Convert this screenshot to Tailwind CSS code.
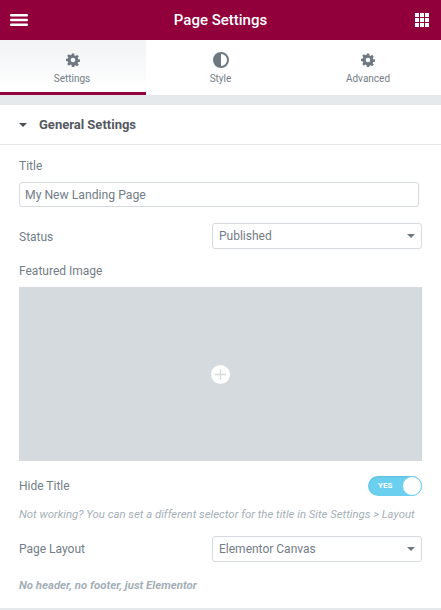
<!DOCTYPE html>
<html lang="en">

<head>
    <meta charset="UTF-8">
    <script src="https://cdn.jsdelivr.net/npm/@tailwindcss/browser@4"></script>
    <title>Page Settings</title>
</head>

<body class="h-[610px] w-[441px] overflow-hidden bg-white font-['Roboto',sans-serif] text-[#737d87]">
    <!-- Header -->
    <header class="flex h-10 items-center justify-between bg-[#92003b] pl-[10px] pr-3 text-white">
        <svg class="h-3 w-[18px]" viewBox="0 0 18 12" fill="currentColor">
            <rect y="0" width="18" height="2.500" rx="1"></rect>
            <rect y="4.750" width="18" height="2.500" rx="1"></rect>
            <rect y="9.500" width="18" height="2.500" rx="1"></rect>
        </svg>
        <h1 class="-translate-x-px text-[15px] leading-none font-medium">Page Settings</h1>
        <svg class="h-[14px] w-[14px]" viewBox="0 0 14 14" fill="currentColor">
            <rect x="0" y="0" width="4" height="4"></rect>
            <rect x="5" y="0" width="4" height="4"></rect>
            <rect x="10" y="0" width="4" height="4"></rect>
            <rect x="0" y="5" width="4" height="4"></rect>
            <rect x="5" y="5" width="4" height="4"></rect>
            <rect x="10" y="5" width="4" height="4"></rect>
            <rect x="0" y="10" width="4" height="4"></rect>
            <rect x="5" y="10" width="4" height="4"></rect>
            <rect x="10" y="10" width="4" height="4"></rect>
        </svg>
    </header>

    <!-- Tabs -->
    <nav class="grid h-[55px] grid-cols-[146px_149px_146px] shadow-[0_1px_3px_rgba(0,0,0,0.12)]">
        <div class="flex flex-col items-center border-b-[3px] border-[#92003b] bg-gradient-to-b from-[#f1f3f5] to-white pt-[13px]">
            <svg class="h-[14px] w-[14px]" viewBox="0 0 24 24" fill="#6d7882">
                <path fill-rule="evenodd" d="M14 1l.5 3.2 1.9.8 2.7-1.9 2.8 2.8-1.9 2.7.8 1.9 3.2.5v4l-3.2.5-.8 1.9 1.9 2.7-2.8 2.8-2.7-1.9-1.900.8L14 23.900h-4l-.5-3.200-1.900-.8-2.700 1.900-2.800-2.800 1.900-2.700-.8-1.900L0 13.900v-4l3.200-.5.8-1.900-1.900-2.700 2.800-2.800 2.700 1.900 1.900-.8L10 1h4zm-2 7a4 4 0 100 8 4 4 0 000-8z"></path>
            </svg>
            <span class="mt-[5px] -translate-x-px text-[10px] leading-[14px]">Settings</span>
        </div>
        <div class="flex flex-col items-center pt-[13px]">
            <svg class="-mt-[1px] h-[16px] w-[16px]" viewBox="0 0 16 16">
                <circle cx="8" cy="8" r="7" fill="none" stroke="#6d7882" stroke-width="2"></circle>
                <path d="M8 1a7 7 0 000 14z" fill="#6d7882"></path>
            </svg>
            <span class="mt-[4px] text-[10px] leading-[14px]">Style</span>
        </div>
        <div class="flex flex-col items-center pt-[13px]">
            <svg class="h-[14px] w-[14px]" viewBox="0 0 24 24" fill="#6d7882">
                <path fill-rule="evenodd" d="M14 1l.5 3.2 1.9.8 2.7-1.9 2.8 2.8-1.9 2.7.8 1.9 3.2.5v4l-3.2.5-.8 1.9 1.9 2.7-2.8 2.8-2.7-1.9-1.900.8L14 23.900h-4l-.5-3.200-1.900-.8-2.700 1.900-2.800-2.800 1.900-2.700-.8-1.900L0 13.900v-4l3.200-.5.8-1.900-1.900-2.700 2.800-2.800 2.700 1.900 1.900-.8L10 1h4zm-2 7a4 4 0 100 8 4 4 0 000-8z"></path>
            </svg>
            <span class="mt-[5px] text-[10px] leading-[14px]">Advanced</span>
        </div>
    </nav>

    <div class="h-[10px] bg-[#e6e9ec]"></div>

    <!-- Section title -->
    <div class="flex h-10 items-center gap-3 border-b border-[#e6e9ec] pl-[19px]">
        <span class="h-0 w-0 border-x-[4px] border-t-[4px] border-x-transparent border-t-[#495157]"></span>
        <h2 class="text-[13px] font-bold text-[#54595f]">General Settings</h2>
    </div>

    <!-- Controls -->
    <main class="px-[19px]">
        <p class="mt-[14px] text-xs leading-[15px]">Title</p>
        <div class="mt-[8px] flex h-[25px] w-[400px] items-center rounded-[3px] border border-[#d5dadf] px-[5px] pt-px text-[12.200px]">My New Landing Page</div>

        <div class="mt-[16px] flex items-center justify-between">
            <span class="pt-px text-xs">Status</span>
            <div class="flex h-[26px] w-[210px] items-center justify-between rounded-[3px] border border-[#d5dadf] px-[6px] text-xs">
                Published
                <span class="h-0 w-0 border-x-[4px] border-t-[4px] border-x-transparent border-t-[#6d7882]"></span>
            </div>
        </div>

        <p class="mt-[15px] text-xs leading-[15px]">Featured Image</p>
        <div class="mt-[8px] flex h-[174px] w-[403px] items-center justify-center bg-[#d5dadf]">
            <span class="flex h-[19px] w-[19px] items-center justify-center rounded-full bg-white">
                <svg class="h-[11px] w-[11px]" viewBox="0 0 11 11" stroke="#d5dadf" stroke-width="1.300">
                    <path d="M5.500 0v11M0 5.500h11"></path>
                </svg>
            </span>
        </div>

        <div class="mt-[15px] flex h-5 w-[403px] items-center justify-between">
            <span class="text-xs">Hide Title</span>
            <div class="flex h-5 w-[54px] items-center justify-between rounded-full bg-[#6bd0f0] pl-[10px] shadow-[inset_0_1px_2px_rgba(0,0,0,0.1)]">
                <span class="text-[8px] font-bold text-white">YES</span>
                <span class="h-5 w-5 rounded-full border border-[#6bd0f0] bg-white"></span>
            </div>
        </div>

        <p class="mt-[10px] text-[11.350px] leading-[16px] whitespace-nowrap italic text-[#a4afb7]">Not working? You can set a different selector for the title in Site Settings &gt; Layout</p>

        <div class="mt-[14px] flex w-[403px] items-center justify-between">
            <span class="text-xs">Page Layout</span>
            <div class="flex h-[26px] w-[210px] items-center justify-between rounded-[3px] border border-[#d5dadf] px-[6px] text-xs">
                Elementor Canvas
                <span class="h-0 w-0 border-x-[4px] border-t-[4px] border-x-transparent border-t-[#6d7882]"></span>
            </div>
        </div>

        <p class="mt-[15px] text-[11.400px] leading-[16px] font-bold italic text-[#a4afb7]">No header, no footer, just Elementor</p>
    </main>

    <div class="mt-[15px] h-[10px] bg-[#e6e9ec]"></div>
</body>

</html>
